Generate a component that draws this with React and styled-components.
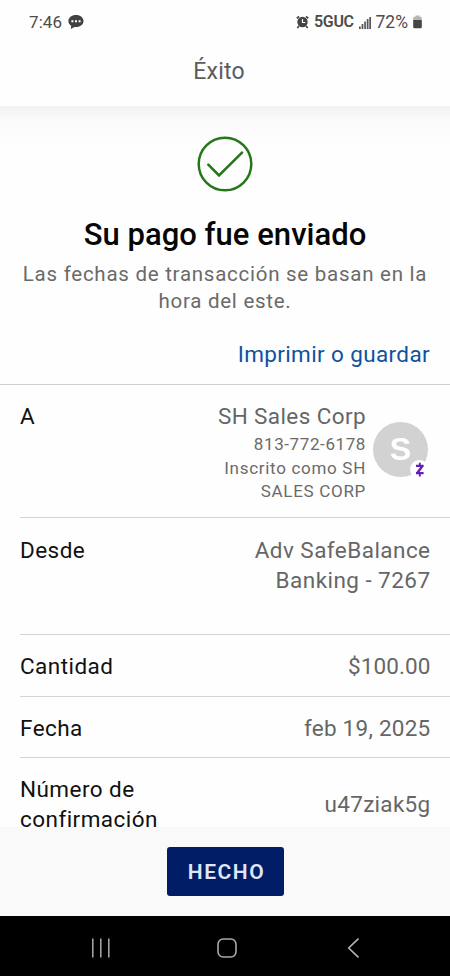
import React from "react";
import styled, { createGlobalStyle } from "styled-components";

const GlobalStyle = createGlobalStyle`
  * { box-sizing: border-box; }
  body { margin: 0; background: #fff; font-family: Roboto, "Liberation Sans", sans-serif; }
`;

const Screen = styled.div`
  display: flex;
  flex-direction: column;
  width: 450px;
  height: 976px;
  overflow: hidden;
  background: #fefefe;
`;

const StatusBar = styled.header`
  display: flex;
  flex: none;
  justify-content: space-between;
  align-items: center;
  height: 44px;
  padding: 0 28px 0 29px;
  color: #4c4c4c;
`;

const StatusGroup = styled.div`
  display: flex;
  align-items: center;
  gap: ${(p) => p.$gap}px;
`;

const StatusText = styled.span`
  font-size: ${(p) => p.$size || 17}px;
  font-weight: ${(p) => (p.$bold ? 600 : 400)};
  letter-spacing: ${(p) => p.$spacing || 0}px;
  word-spacing: ${(p) => (p.$bold ? -3 : 0)}px;
  line-height: 20px;
  white-space: nowrap;
`;

const TitleBar = styled.div`
  flex: none;
  height: 62px;
  padding-top: 13px;
  padding-right: 12px;
  text-align: center;
  font-size: 23px;
  line-height: 30px;
  letter-spacing: 0.2px;
  color: #5c5c5c;
`;

const Content = styled.main`
  flex: 1;
  min-height: 0;
  overflow: hidden;
  background: linear-gradient(#f2f2f2, #fafafa 14px, #fefefe 42px);
`;

const Confirmation = styled.section`
  display: flex;
  flex-direction: column;
  align-items: center;
  height: 279px;
  padding-top: 30px;
  border-bottom: 1px solid #cfcfcf;
  text-align: center;
`;

const Headline = styled.h1`
  margin: 24px 0 0;
  font-size: 31px;
  font-weight: 500;
  line-height: 38px;
  letter-spacing: 0.03px;
  color: #060606;
`;

const Note = styled.p`
  margin: 7px 0 0;
  font-size: 20.5px;
  line-height: 27px;
  letter-spacing: 0.74px;
  color: #6a6a6a;
`;

const PrintLink = styled.a`
  align-self: flex-end;
  margin: 24px 20px 0 0;
  font-size: 22.5px;
  line-height: 30px;
  letter-spacing: 0.37px;
  color: #0e52a0;
`;

const Row = styled.div`
  display: flex;
  justify-content: space-between;
  align-items: flex-start;
  height: ${(p) => p.$height}px;
  margin-left: 20px;
  padding: ${(p) => p.$top || 16}px ${(p) => p.$right || 19.5}px 0 0;
  border-bottom: 1px solid #d4d4d4;
`;

const Label = styled.div`
  font-size: 22.5px;
  line-height: 30px;
  letter-spacing: 0.45px;
  color: #111;
`;

const Value = styled(Label)`
  margin-top: ${(p) => p.$offset || 0}px;
  letter-spacing: ${(p) => p.$spacing || 0.3}px;
  color: #666;
  text-align: right;
`;

const Payee = styled.div`
  display: flex;
  gap: 7px;
`;

const PayeeDetail = styled.div`
  font-size: 17px;
  line-height: ${(p) => p.$line}px;
  letter-spacing: ${(p) => p.$spacing}px;
  color: #6a6a6a;
  text-align: right;
`;

const Avatar = styled.div`
  position: relative;
  display: grid;
  place-items: center;
  width: 55px;
  height: 55px;
  margin-top: 21px;
  border-radius: 50%;
  background: #d2d2d2;
  color: #fff;
  font: 700 32px "Liberation Sans", sans-serif;
`;

const Badge = styled.span`
  position: absolute;
  right: -1px;
  bottom: -2px;
  display: grid;
  place-items: center;
  width: 19px;
  height: 19px;
  border-radius: 50%;
  background: #fff;
`;

const Footer = styled.footer`
  display: flex;
  flex: none;
  justify-content: center;
  height: 89px;
  padding-top: 20px;
  background: #f9f9f9;
`;

const DoneButton = styled.button`
  width: 117px;
  height: 49px;
  padding: 1px 0 0 3px;
  border: 0;
  border-radius: 3px;
  background: #001d66;
  color: #dfe6f7;
  font: 600 21px/28px Roboto, sans-serif;
  letter-spacing: 1.5px;
`;

const NavBar = styled.nav`
  display: flex;
  flex: none;
  align-items: center;
  height: 60px;
  padding: 3px 90px 0 91px;
  justify-content: space-between;
  background: #000;
`;

const HomeButton = styled.span`
  display: flex;
  padding-right: 4px;
`;

const ChatIcon = () => (
  <svg width="16" height="16" viewBox="0 0 16 16">
    <path d="M8 1C3.6 1 .4 3.6.4 7.1c0 2 1 3.6 2.8 4.7L2.8 15l3.7-2 1.5.1c4.400 0 7.500-2.500 7.500-6S12.400 1 8 1z" fill="#424242" />
    <path d="M3.400 6.200h2v2h-2zM7 6.200h2v2H7zM10.600 6.200h2v2h-2z" fill="#fff" />
  </svg>
);

const AlarmIcon = () => (
  <svg width="13" height="14" viewBox="0 0 13 14" fill="none">
    <circle cx="6.500" cy="7" r="5.200" fill="#444" />
    <path d="M.8 3.300 3 1.300M12.200 3.300 10 1.300M3 11l-1.700 2M10 11l1.700 2" stroke="#444" strokeWidth="1.700" />
    <path d="M6.500 4v3.500H9.300" stroke="#fff" strokeWidth="1.200" />
  </svg>
);

const SignalIcon = () => (
  <svg width="12" height="13" viewBox="0 0 12 13" fill="#555">
    <path d="M0 10.500h1.700V13H0zM2.600 8h1.700v5H2.600zM5.200 5.500h1.700V13H5.200zM7.800 3h1.700v10H7.800zM10.300 1h1.700v12h-1.700z" />
  </svg>
);

const BatteryIcon = () => (
  <svg width="9" height="14" viewBox="0 0 9 14">
    <path d="M2.500.5h4v1.200h1A1.300 1.300 0 0 1 8.800 3v2H.2V3a1.300 1.300 0 0 1 1.300-1.300h1z" fill="#b5b5b5" />
    <path d="M.2 5h8.600v7a1.300 1.300 0 0 1-1.300 1.300h-6A1.300 1.300 0 0 1 .2 12z" fill="#444" />
  </svg>
);

const SuccessIcon = () => (
  <svg width="56" height="56" viewBox="0 0 56 56" fill="none" stroke="#26761a" strokeWidth="2.500">
    <circle cx="28" cy="28" r="26.300" />
    <path d="M11.300 28.700 22 39.500 45 16.600" strokeLinecap="round" strokeLinejoin="miter" strokeWidth="2.600" />
  </svg>
);

const ZelleIcon = () => (
  <svg width="10" height="15" viewBox="0 0 10 15" fill="none" stroke="#6420b4" strokeWidth="2.200">
    <path d="M1 3.800h7.600M1 11.200h7.600" />
    <path d="M7.400 4 2.300 11" strokeWidth="2.400" />
    <path d="M4.800.7v3M4.800 11.200v3.200" strokeWidth="1.900" />
  </svg>
);

const RecentsIcon = () => (
  <svg width="20" height="20" viewBox="0 0 20 20" stroke="#aaa" strokeWidth="1.500">
    <path d="M1.800.5v19M9.800.5v19M17.800.5v19" />
  </svg>
);

const HomeIcon = () => (
  <svg width="20" height="20" viewBox="0 0 20 20" fill="none" stroke="#aaa" strokeWidth="1.600">
    <rect x="1" y="1" width="18" height="18" rx="5.200" />
  </svg>
);

const BackIcon = () => (
  <svg width="13" height="20" viewBox="0 0 13 20" fill="none" stroke="#b4b4b4" strokeWidth="1.600">
    <path d="M11.500.7 1.700 10l9.800 9.300" />
  </svg>
);

export default function App() {
  return (
    <>
      <GlobalStyle />
      <Screen>
        <StatusBar>
          <StatusGroup $gap={6}>
            <StatusText $spacing={0.1}>7:46</StatusText>
            <ChatIcon />
          </StatusGroup>
          <StatusGroup $gap={5}>
            <AlarmIcon />
            <StatusText $bold $size={16} $spacing={-0.5}>5G UC</StatusText>
            <SignalIcon />
            <StatusText $size={17.5}>72%</StatusText>
            <BatteryIcon />
          </StatusGroup>
        </StatusBar>
        <TitleBar>Éxito</TitleBar>
        <Content>
          <Confirmation>
            <SuccessIcon />
            <Headline>Su pago fue enviado</Headline>
            <Note>
              Las fechas de transacción se basan en la
              <br />
              hora del este.
            </Note>
            <PrintLink>Imprimir o guardar</PrintLink>
          </Confirmation>
          <Row $height={133} $right={22}>
            <Label>A</Label>
            <Payee>
              <div>
                <Value $spacing={0.4}>SH Sales Corp</Value>
                <PayeeDetail $line={26} $spacing={0.6}>813-772-6178</PayeeDetail>
                <PayeeDetail $line={23} $spacing={0.7}>
                  Inscrito como SH
                  <br />
                  SALES CORP
                </PayeeDetail>
              </div>
              <Avatar>
                S
                <Badge>
                  <ZelleIcon />
                </Badge>
              </Avatar>
            </Payee>
          </Row>
          <Row $height={117} $top={17}>
            <Label>Desde</Label>
            <Value $spacing={0.45}>
              Adv SafeBalance
              <br />
              Banking - 7267
            </Value>
          </Row>
          <Row $height={62}>
            <Label>Cantidad</Label>
            <Value $spacing={0.1}>$100.00</Value>
          </Row>
          <Row $height={61}>
            <Label>Fecha</Label>
            <Value $spacing={0.25}>feb 19, 2025</Value>
          </Row>
          <Row $height={94}>
            <Label>
              Número de
              <br />
              confirmación
            </Label>
            <Value $offset={15}>u47ziak5g</Value>
          </Row>
        </Content>
        <Footer>
          <DoneButton>HECHO</DoneButton>
        </Footer>
        <NavBar>
          <RecentsIcon />
          <HomeButton>
            <HomeIcon />
          </HomeButton>
          <BackIcon />
        </NavBar>
      </Screen>
    </>
  );
}
